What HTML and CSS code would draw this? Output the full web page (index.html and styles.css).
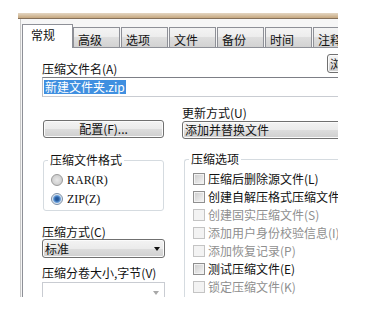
FILE: index.html
```html
<!DOCTYPE html>
<html lang="zh-CN">
<head>
<meta charset="utf-8">
<title>压缩文件名和参数</title>
<link rel="stylesheet" href="styles.css">
</head>
<body>
<div class="frame">
  <div class="bar"></div>
  <div class="dialog">
    <div class="tabs">
      <div class="tab active">常规</div>
      <div class="tab">高级</div>
      <div class="tab">选项</div>
      <div class="tab">文件</div>
      <div class="tab">备份</div>
      <div class="tab">时间</div>
      <div class="tab">注释</div>
    </div>
    <div class="panel">
      <div class="row-name">
        <span class="label">压缩文件名(A)</span>
        <div class="btn btn-browse">浏览(B)...</div>
      </div>
      <div class="input"><span class="sel">新建文件夹.zip</span></div>
      <div class="cols">
        <div class="col-left">
          <div class="btn btn-config">配置(F)...</div>
          <fieldset class="group group-format">
            <legend>压缩文件格式</legend>
            <div class="opt"><span class="radio"></span><span>RAR(R)</span></div>
            <div class="opt"><span class="radio on"></span><span>ZIP(Z)</span></div>
          </fieldset>
          <div class="label lbl-method">压缩方式(C)</div>
          <div class="combo combo-btn combo-method"><span>标准</span><span class="arrow"></span></div>
          <div class="label lbl-volume">压缩分卷大小,字节(V)</div>
          <div class="combo combo-edit"><span></span><span class="arrow grey"></span></div>
        </div>
        <div class="col-right">
          <div class="label">更新方式(U)</div>
          <div class="combo combo-btn combo-update"><span>添加并替换文件</span></div>
          <fieldset class="group group-options">
            <legend>压缩选项</legend>
            <div class="chk"><span class="box"></span><span>压缩后删除源文件(L)</span></div>
            <div class="chk"><span class="box"></span><span>创建自解压格式压缩文件(X)</span></div>
            <div class="chk off"><span class="box"></span><span>创建固实压缩文件(S)</span></div>
            <div class="chk off"><span class="box"></span><span>添加用户身份校验信息(I)</span></div>
            <div class="chk off"><span class="box"></span><span>添加恢复记录(P)</span></div>
            <div class="chk"><span class="box"></span><span>测试压缩文件(E)</span></div>
            <div class="chk off"><span class="box"></span><span>锁定压缩文件(K)</span></div>
          </fieldset>
        </div>
      </div>
    </div>
  </div>
</div>
</body>
</html>
```
FILE: styles.css
```css
* { box-sizing: border-box; }
html, body { margin: 0; padding: 0; background: #fff; }
body {
  font-family: "Noto Sans CJK SC", "Noto Sans", sans-serif;
  font-size: 12px;
  line-height: 14px;
  color: #111;
}
.frame {
  margin: 13px 0 0 18px;
  width: 320px;
  height: 284px;
  overflow: hidden;
  background: #fff;
}
.bar {
  height: 6px;
  background: linear-gradient(#e4d6c2, #c6a880);
  border-bottom: 1px solid #85705a;
}
.dialog {
  margin-left: 2px;
  border-left: 1px solid #c9c9c9;
  padding: 5px 0 0 1px;
  width: 440px;
  background: #f6f6f6;
}
.tabs {
  display: flex;
  align-items: flex-end;
  height: 24px;
  margin-bottom: -1px;
}
.tab {
  width: 47px;
  height: 20px;
  margin: 0 0 1px 1px;
  padding: 5px 0 0 4px;
  line-height: 14px;
  border: 1px solid #8e9097;
  border-bottom: none;
  background: linear-gradient(#f4f4f4, #ececec 50%, #dedede 50%, #d2d2d2);
  color: #111;
}
.tab.active {
  position: relative;
  z-index: 1;
  width: 51px;
  height: 24px;
  margin: 0;
  padding: 3px 0 0 8px;
  background: #fff;
}
.tab.active + .tab { margin-left: 0; }
.panel {
  border-left: 1px solid #8e9097;
  border-top: 1px solid #8e9097;
  background: #fff;
  padding: 6px 0 0 19px;
  height: 270px;
}
.row-name {
  display: grid;
  grid-template-columns: 285px 75px;
  align-items: end;
}
.label { line-height: 14px; white-space: nowrap; }
.btn {
  border: 1px solid #707070;
  border-radius: 3px;
  background: linear-gradient(#f3f3f3, #ebebeb 50%, #dddddd 50%, #cfcfcf);
  box-shadow: inset 0 0 0 1px #fbfbfb;
  text-align: center;
  white-space: nowrap;
}
.btn-browse {
  height: 19px;
  margin-bottom: 3px;
  line-height: 17px;
  text-align: left;
  padding-left: 2px;
}
.input {
  margin-top: 1px;
  width: 360px;
  height: 20px;
  border: 1px solid;
  border-color: #7d7f86 #dbdfe6 #c9ccd2 #b9bcc4;
  padding: 2px 1px;
  line-height: 14px;
}
.sel {
  display: inline-block;
  background: #3f8fe0;
  color: #fff;
  padding: 0 1px;
}
.cols {
  display: flex;
  margin-top: 9px;
}
.col-left { width: 123px; margin-right: 17px; flex: none; }
.col-right { width: 240px; flex: none; }
.btn-config {
  margin: 14px 0 0 1px;
  width: 121px;
  height: 18px;
  line-height: 16px;
}
.group {
  margin: 0;
  padding: 0;
  min-width: 0;
  border: 1px solid #d5dbe0;
  border-radius: 3px;
}
.group legend {
  padding: 0 2px;
  line-height: 14px;
}
.group-format {
  margin: 15px 0 0 1px;
  width: 121px;
  padding: 3px 0 2px 7px;
}
.group-format legend { margin-left: -3px; }
.opt {
  display: flex;
  align-items: center;
  height: 19px;
  font-family: "Liberation Serif", "Noto Sans CJK SC", serif;
}
.opt span:last-child { margin-left: 4px; }
.radio {
  width: 12px;
  height: 12px;
  border-radius: 50%;
  border: 1px solid #9a9a9a;
  background: radial-gradient(circle at 50% 50%, #e8e8e8, #cfcfcf 70%, #bdbdbd);
}
.radio.on {
  border-color: #7b8ea6;
  background: radial-gradient(circle at 50% 50%, #1f4f8f 0, #2d64a8 2px, #6fa3dc 3.5px, #dfe6ee 4.5px, #f2f2f2 6px);
}
.lbl-method { margin-top: 14px; }
.combo {
  display: flex;
  align-items: center;
  justify-content: space-between;
  border-radius: 3px;
  white-space: nowrap;
}
.combo-btn {
  border: 1px solid #707070;
  background: linear-gradient(#f3f3f3, #ebebeb 50%, #dddddd 50%, #cfcfcf);
  box-shadow: inset 0 0 0 1px #fbfbfb;
  padding: 0 4px 0 2px;
}
.combo-method { height: 19px; }
.combo-update { margin-top: 1px; height: 18px; width: 240px; }
.arrow {
  width: 0;
  height: 0;
  border-left: 3.5px solid transparent;
  border-right: 3.5px solid transparent;
  border-top: 4px solid #111;
}
.arrow.grey { border-top-color: #a8a8a8; }
.lbl-volume { margin-top: 8px; }
.combo-edit {
  margin-top: 2px;
  height: 22px;
  border: 1px solid #c9ccd2;
  border-radius: 0;
  background: #fff;
  padding: 0 5px 0 2px;
}
.group-options {
  margin: 13px 0 0 2px;
  padding: 4px 0 10px 8px;
  border-right: none;
  border-bottom: none;
}
.group-options legend { margin-left: -4px; }
.chk {
  display: flex;
  align-items: center;
  height: 18px;
  white-space: nowrap;
}
.chk .box {
  width: 12px;
  height: 12px;
  flex: none;
  border: 1px solid #8f8f8f;
  box-shadow: inset 0 0 0 1px #f2f2f2;
  background: linear-gradient(135deg, #cbcbcb, #f6f6f6);
}
.chk span:last-child { margin-left: 3px; }
.chk.off { color: #8f8f8f; }
.chk.off .box {
  border-color: #c4c4c4;
  background: #f3f3f3;
  box-shadow: none;
}
```
